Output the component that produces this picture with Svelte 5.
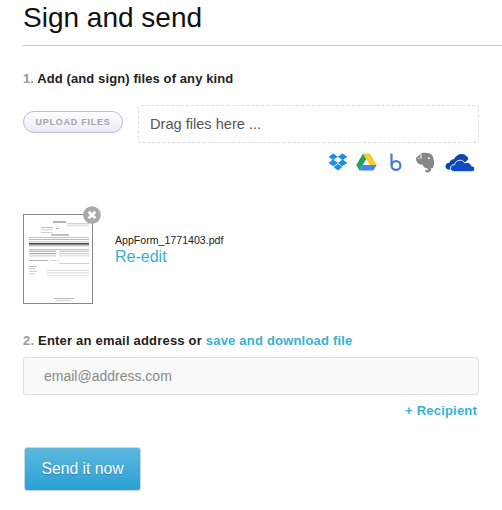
<script>
	// x, y, width, height, colour of the tiny lines on the document preview
	const docLines = [
		[29, 6.5, 13, 1, '#666'], [43, 8.5, 22, 0.7, '#aaa'], [43, 10.5, 22, 0.7, '#ccc'],
		[17, 12, 12, 0.7, '#aaa'], [32, 13, 3, 0.7, '#888'], [17, 14.5, 12, 0.7, '#bbb'], [17, 17, 12, 0.7, '#bbb'],
		[27, 19.5, 18, 0.9, '#777'],
		[5, 22, 60, 0.7, '#aaa'], [5, 24, 60, 0.7, '#999'], [5, 26.5, 60, 0.7, '#aaa'],
		[5, 28, 60, 1.6, '#444'], [5, 30.5, 60, 0.7, '#888'],
		[5, 34, 60, 0.8, '#bbb'], [5, 35.5, 27, 1.4, '#bbb'], [35, 35.5, 30, 1.4, '#ccc'],
		[5, 38, 27, 1.2, '#aaa'], [35, 38, 30, 1.2, '#ccc'], [5, 40.5, 27, 0.8, '#bbb'], [35, 40.5, 30, 0.8, '#ccc'],
		[5, 45, 19, 0.8, '#999'], [26, 45, 10, 0.7, '#ccc'], [35, 48, 30, 0.7, '#bbb'],
		[5, 51, 8, 0.7, '#aaa'], [5, 53.5, 6, 0.7, '#aaa'], [5, 56, 8, 0.7, '#bbb'], [5, 58.5, 6, 0.7, '#bbb'],
		[23, 55, 42, 0.7, '#ccc'], [23, 57.5, 42, 0.7, '#ccc'], [23, 60, 42, 0.7, '#ddd'],
		[30, 83, 20, 0.7, '#999'], [32, 85, 15, 0.7, '#bbb']
	];
</script>

<main class="page">
	<h1>Sign and send</h1>

	<section class="step-one">
		<h2><span class="num">1.</span> Add (and sign) files of any kind</h2>
		<div class="upload-row">
			<button class="upload">UPLOAD FILES</button>
			<div class="dropzone">Drag files here ...</div>
		</div>
		<div class="sources">
			<svg width="20" height="18" viewBox="0 0 20 18"><path fill="#1c8ee6" d="M5.500 0.500 0.500 3.800l4 3-4 3.200 5 3.200 4.300-3.300-4.300-3.100 4.300-3zM14.500 0.500l-4.700 3.300 4.300 3-4.300 3.100 4.300 3.300 5.200-3.200-4.200-3.200 4.200-3zM5.500 14l4.400 3.500 4.500-3.500-4.500-3z"/></svg>
			<svg width="21" height="18" viewBox="0 0 21 18"><path fill="#1ea362" d="M7 0.500 0.300 12l3.200 5.500L10.200 6z"/><path fill="#fcc934" d="M7 0.500h7l6.700 11.500h-7z"/><path fill="#4285f4" d="M6.300 12h14.400l-3.300 5.500H3.500z"/></svg>
			<svg class="gap-wide" width="12" height="18" viewBox="0 0 12 18"><path fill="none" stroke="#4b7cc4" stroke-width="2.200" d="M1.500 0.500v12"/><circle cx="6" cy="12.500" r="4.400" fill="none" stroke="#4b7cc4" stroke-width="2.200"/></svg>
			<svg class="gap-wide" width="20" height="21" viewBox="0 0 20 21"><path fill="#87878a" d="M1 6 5 2.500C6 1 9 0.500 12 1c3 0 5 1 6 4 1.500 4 1.500 8 0 10.500-0.500 1-1 1-2 0.500 0.500 2-0.500 4.500-3.500 4.500-2 0-3-1.500-2-3l2 1c1-0.500 0.500-2-1.500-2.500-2-0.500-3-1.500-3.500-3.500-2.500 0-4.500-0.500-5.500-2.500C1 8.500 1 7 1 6z"/><path fill="#fff" d="M5.500 2.500v3.500H2.500l-0.500 0.500h4.500V2zM13 5.500h1.800v1.500H13z"/></svg>
			<svg class="gap-last" width="30" height="19" viewBox="0 0 30 19"><path fill="#0f47a8" d="M4 16.500C1.500 16.500 0.500 15 0.500 13.300 0.500 11 2.500 9.500 4.500 9.800 5 7.500 7 6 9 6.300 10.500 3 13.500 1 16.500 1c3.500 0 6 2 7 5l-8 8-5 4z"/><path fill="#0e4cc4" stroke="#fff" stroke-width="0.900" d="M9.500 18.700c-2.500 0-4-1.500-4-3.500 0-2.200 1.800-3.700 4-3.500 0.500-2.500 2.800-4.500 5.500-4.500 2 0 3.700 1 4.700 2.700 1-0.500 2-0.700 3-0.500 2 0.300 3.500 1.700 3.800 3.500 1.800 0 3.300 1.300 3.300 3 0 1.600-1.200 2.800-3 2.800z"/></svg>
		</div>
	</section>

	<section class="file">
		<div class="thumb">
			<svg class="doc" width="68" height="88" viewBox="0 0 68 88">
				{#each docLines as [x, y, w, h, fill]}
					<rect {x} {y} width={w} height={h} {fill} />
				{/each}
			</svg>
			<span class="remove">
				<svg width="18" height="18" viewBox="0 0 18 18"><circle cx="9" cy="9" r="8.800" fill="#a9a9a9"/><path d="M5.700 5.700l6.600 6.600M12.300 5.700l-6.600 6.600" stroke="#fff" stroke-width="2.800"/></svg>
			</span>
		</div>
		<div class="file-info">
			<div class="file-name">AppForm_1771403.pdf</div>
			<a class="re-edit" href="#top">Re-edit</a>
		</div>
	</section>

	<section class="step-two">
		<h2><span class="num">2.</span> Enter an email address or <a href="#top">save and download file</a></h2>
		<input type="text" placeholder="email@address.com" />
		<div class="recipient"><a href="#top">+ Recipient</a></div>
	</section>

	<button class="send">Send it now</button>
</main>

<style>
	:global(body) {
		background: #fff;
		font-family: "Liberation Sans", Arial, sans-serif;
	}
	.page {
		height: 510px;
		overflow: hidden;
		padding-top: 2px;
		box-sizing: border-box;
	}
	h1 {
		margin: 0 0 0 23px;
		padding: 0 0 11px;
		font-size: 28px;
		line-height: 32px;
		font-weight: 400;
		color: #111;
		border-bottom: 1px solid #ccc;
	}
	h2 {
		margin: 0;
		font-size: 13px;
		line-height: 16px;
		font-weight: 700;
		color: #222;
		letter-spacing: 0.2px;
	}
	.step-one h2 {
		letter-spacing: 0.1px;
	}
	.num {
		color: #999;
	}
	h2 a {
		color: #35b3d3;
		text-decoration: none;
	}
	.step-one {
		padding: 25px 23px 0;
	}
	.upload-row {
		display: flex;
		align-items: center;
		gap: 15px;
		margin-top: 18px;
	}
	.upload {
		width: 100px;
		height: 22px;
		padding: 0;
		border: 1px solid #bcbcd8;
		border-radius: 11px;
		background: linear-gradient(#fff, #eaeaf4);
		color: #a3a3a8;
		font: 700 9px/20px "Liberation Sans", Arial, sans-serif;
		letter-spacing: 0.75px;
		margin-bottom: 5px;
	}
	.dropzone {
		flex: 1;
		height: 36px;
		border: 1px dashed #ddd;
		border-radius: 3px;
		padding-left: 11px;
		font-size: 14.600px;
		line-height: 36px;
		color: #555;
	}
	.sources {
		display: flex;
		justify-content: flex-end;
		align-items: center;
		gap: 8px;
		height: 22px;
		margin-top: 8px;
		padding-right: 4px;
	}
	.gap-wide {
		margin-left: 5px;
	}
	.gap-last {
		margin-left: 2px;
	}
	.file {
		display: flex;
		align-items: center;
		gap: 22px;
		margin: 41px 0 0 23px;
	}
	.thumb {
		position: relative;
		width: 68px;
		height: 88px;
		border: 1px solid #888;
	}
	.doc {
		display: block;
	}
	.remove {
		position: absolute;
		top: -9px;
		right: -9px;
		width: 18px;
		height: 18px;
	}
	.remove svg {
		display: block;
	}
	.file-info {
		margin-top: -17px;
	}
	.file-name {
		margin-bottom: 1px;
		font-size: 10.600px;
		line-height: 12px;
		color: #222;
	}
	.re-edit {
		display: block;
		font-size: 16px;
		line-height: 20px;
		color: #38aed2;
		text-decoration: none;
	}
	.step-two {
		padding: 29px 23px 0;
	}
	input {
		display: block;
		width: 100%;
		box-sizing: border-box;
		height: 38px;
		margin-top: 8px;
		padding: 0 20px;
		border: 1px solid #ddd;
		border-radius: 3px;
		background: #f9f9f9;
		font: 14px "Liberation Sans", Arial, sans-serif;
		outline: none;
	}
	input::placeholder {
		color: #888;
		opacity: 1;
	}
	.recipient {
		margin-top: 8px;
		padding-right: 2px;
		text-align: right;
		font-size: 13px;
		line-height: 16px;
		font-weight: 700;
		letter-spacing: 0.2px;
	}
	.recipient a {
		color: #35b3d3;
		text-decoration: none;
	}
	.send {
		display: block;
		width: 117px;
		height: 44px;
		margin: 28px 0 0 24px;
		padding: 0;
		border: 1px solid #c6d9e4;
		border-radius: 3px;
		background: linear-gradient(#5cb8de, #2aa0d5);
		color: #fff;
		font: 15.700px "Liberation Sans", Arial, sans-serif;
		text-shadow: 0 1px 1px rgba(0, 0, 0, 0.25);
	}
</style>
